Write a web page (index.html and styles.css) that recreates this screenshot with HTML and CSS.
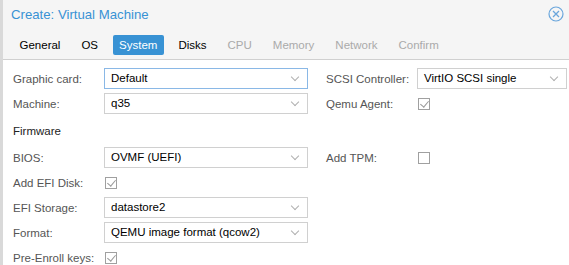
FILE: index.html
```html
<!DOCTYPE html>
<html lang="en">

<head>
    <meta charset="UTF-8">
    <title>Create: Virtual Machine</title>
    <link rel="stylesheet" href="styles.css">
</head>

<body>
    <div class="window">
        <div class="window-header">
            <div class="title-bar">
                <span class="title">Create: Virtual Machine</span>
                <svg class="close-icon" width="16" height="16" viewBox="0 0 16 16">
                    <circle cx="8" cy="8" r="7" fill="none" stroke="#6aa6dc" stroke-width="1.2"/>
                    <path d="M5 5 L11 11 M11 5 L5 11" stroke="#6aa6dc" stroke-width="1.3"/>
                </svg>
            </div>
            <div class="tabs">
                <span class="tab">General</span>
                <span class="tab">OS</span>
                <span class="tab active">System</span>
                <span class="tab">Disks</span>
                <span class="tab disabled">CPU</span>
                <span class="tab disabled">Memory</span>
                <span class="tab disabled">Network</span>
                <span class="tab disabled">Confirm</span>
            </div>
        </div>

        <div class="form-body">
            <div class="form-column left">
                <div class="form-row">
                    <span class="field-label">Graphic card:</span>
                    <div class="combo focused">Default<span class="chevron"></span></div>
                </div>
                <div class="form-row">
                    <span class="field-label">Machine:</span>
                    <div class="combo">q35<span class="chevron"></span></div>
                </div>
                <div class="form-row section">
                    <span class="section-title">Firmware</span>
                </div>
                <div class="form-row">
                    <span class="field-label">BIOS:</span>
                    <div class="combo">OVMF (UEFI)<span class="chevron"></span></div>
                </div>
                <div class="form-row">
                    <span class="field-label">Add EFI Disk:</span>
                    <span class="checkbox checked"></span>
                </div>
                <div class="form-row">
                    <span class="field-label">EFI Storage:</span>
                    <div class="combo">datastore2<span class="chevron"></span></div>
                </div>
                <div class="form-row">
                    <span class="field-label">Format:</span>
                    <div class="combo">QEMU image format (qcow2)<span class="chevron"></span></div>
                </div>
                <div class="form-row">
                    <span class="field-label">Pre-Enroll keys:</span>
                    <span class="checkbox checked"></span>
                </div>
            </div>

            <div class="form-column right">
                <div class="form-row">
                    <span class="field-label">SCSI Controller:</span>
                    <div class="combo">VirtIO SCSI single<span class="chevron"></span></div>
                </div>
                <div class="form-row">
                    <span class="field-label">Qemu Agent:</span>
                    <span class="checkbox checked"></span>
                </div>
                <div class="form-row section"></div>
                <div class="form-row">
                    <span class="field-label">Add TPM:</span>
                    <span class="checkbox"></span>
                </div>
            </div>
        </div>
    </div>
</body>

</html>
```

FILE: styles.css
```css
body {
    margin: 0;
    background: #fff;
    font-family: "Liberation Sans", Arial, sans-serif;
    font-size: 11.5px;
    color: #000;
}

.window {
    border-left: 3px solid #d9d9d9;
    height: 265px;
    overflow: hidden;
}

.window-header {
    background: #f5f5f5;
    border-bottom: 1px solid #d0d0d0;
    height: 59px;
}

.title-bar {
    display: flex;
    justify-content: space-between;
    align-items: center;
    height: 28px;
    padding: 0 5px 0 8px;
}

.title {
    color: #3892d4;
    font-size: 13.2px;
}

.close-icon {
    display: block;
}

.tabs {
    display: flex;
    gap: 8px;
    padding: 7px 0 0 10px;
}

.tab {
    padding: 3px 6.5px;
    height: 14px;
    line-height: 14px;
    border-radius: 2px;
    color: #000;
}

.tab.active {
    background: #3892d4;
    color: #fff;
}

.tab.disabled {
    color: #aaa;
}

.form-body {
    display: flex;
    padding: 8px 0 0 10px;
}

.form-column {
    display: flex;
    flex-direction: column;
    gap: 4px;
}

.form-column.left {
    width: 313px;
}

.form-row {
    display: flex;
    align-items: center;
    height: 21px;
}

.form-row.section {
    height: 25px;
}

.field-label {
    width: 91px;
    color: #555;
}

.section-title {
    color: #222;
}

.combo {
    position: relative;
    box-sizing: border-box;
    height: 21px;
    line-height: 19px;
    padding-left: 6px;
    border: 1px solid #d0d0d0;
    background: #fff;
    width: 204px;
}

.right .combo {
    width: 150px;
}

.combo.focused {
    border-color: #8ab8e6;
}

.chevron {
    position: absolute;
    right: 9px;
    top: 5px;
    width: 5px;
    height: 5px;
    border-right: 1px solid #b0b0b0;
    border-bottom: 1px solid #b0b0b0;
    transform: rotate(45deg);
}

.checkbox {
    position: relative;
    box-sizing: border-box;
    width: 12px;
    height: 12px;
    border: 1px solid #a0a0a0;
    margin-left: 1px;
    background: #fff;
}

.checkbox.checked::after {
    content: "";
    position: absolute;
    left: 3px;
    top: 0;
    width: 4px;
    height: 7px;
    border-right: 1px solid #999;
    border-bottom: 1px solid #999;
    transform: rotate(40deg);
}
```
